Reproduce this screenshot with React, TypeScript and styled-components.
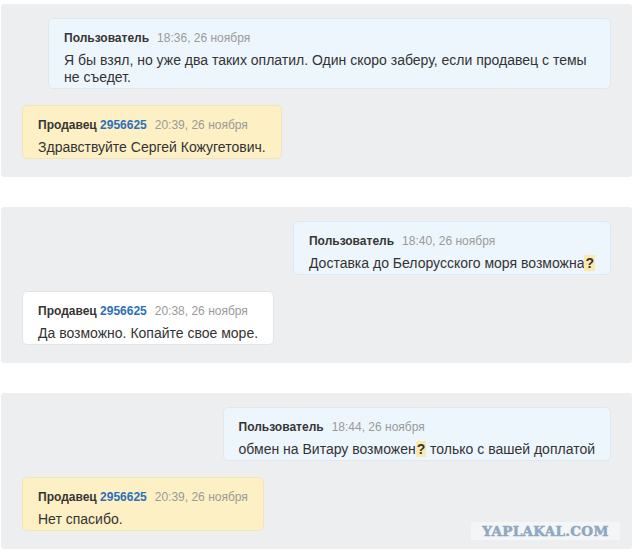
import React from "react";
import styled, { createGlobalStyle } from "styled-components";

const Global = createGlobalStyle`
  html, body { margin: 0; padding: 0; background: #ffffff; }
  body { font-family: "Liberation Sans", Arial, sans-serif; color: #333; }
`;

const Page = styled.div`
  display: flex;
  flex-direction: column;
  gap: 30px;
  padding: 4px 0 0 1px;
  width: 631px;
`;

const Panel = styled.section`
  position: relative;
  display: flex;
  flex-direction: column;
  gap: 16px;
  padding: 14px 21px 18px 21px;
  background: #eceef0;
  border-radius: 3px;
`;

const Row = styled.div<{ $side: "left" | "right" }>`
  display: flex;
  justify-content: ${(p) => (p.$side === "right" ? "flex-end" : "flex-start")};
`;

type Tone = "user" | "seller" | "plain";

const tones: Record<Tone, { bg: string; border: string }> = {
  user: { bg: "#eef6fd", border: "#dfe8f0" },
  seller: { bg: "#fdf0c5", border: "#f2e4b4" },
  plain: { bg: "#ffffff", border: "#e2e5e8" },
};

const Bubble = styled.div<{ $tone: Tone }>`
  box-sizing: border-box;
  max-width: 563px;
  padding: 11px 15px 2px 15px;
  background: ${(p) => tones[p.$tone].bg};
  border: 1px solid ${(p) => tones[p.$tone].border};
  border-radius: 5px;
`;

const Header = styled.div`
  font-size: 12px;
  line-height: 16px;
  white-space: nowrap;
`;

const Name = styled.span`
  font-weight: bold;
  color: #363636;
`;

const Id = styled.span`
  font-weight: bold;
  color: #2c70b9;
`;

const Time = styled.span`
  margin-left: 8px;
  color: #9a9a9a;
`;

const Body = styled.div`
  margin-top: 6px;
  font-size: 14px;
  line-height: 17px;
  color: #333;
`;

const Q = styled.span`
  font-weight: bold;
  background: #fbe9ae;
  padding: 0 1px;
`;

const Watermark = styled.div`
  position: absolute;
  right: 12px;
  bottom: 9px;
  width: 149px;
  height: 18px;
  display: flex;
  align-items: center;
  justify-content: center;
  background: #f3f5f7;
  color: #8ea8bf;
  font-family: "DejaVu Serif", "Liberation Serif", serif;
  font-weight: bold;
  font-size: 13.5px;
  letter-spacing: 0.3px;
  -webkit-text-stroke: 0.5px #8ea8bf;
`;

type Msg = {
  side: "left" | "right";
  tone: Tone;
  name: string;
  id?: string;
  time: string;
  body: React.ReactNode;
};

const threads: Msg[][] = [
  [
    {
      side: "right",
      tone: "user",
      name: "Пользователь",
      time: "18:36, 26 ноября",
      body: "Я бы взял, но уже два таких оплатил. Один скоро заберу, если продавец с темы не съедет.",
    },
    {
      side: "left",
      tone: "seller",
      name: "Продавец",
      id: "2956625",
      time: "20:39, 26 ноября",
      body: "Здравствуйте Сергей Кожугетович.",
    },
  ],
  [
    {
      side: "right",
      tone: "user",
      name: "Пользователь",
      time: "18:40, 26 ноября",
      body: (
        <>
          Доставка до Белорусского моря возможна<Q>?</Q>
        </>
      ),
    },
    {
      side: "left",
      tone: "plain",
      name: "Продавец",
      id: "2956625",
      time: "20:38, 26 ноября",
      body: "Да возможно. Копайте свое море.",
    },
  ],
  [
    {
      side: "right",
      tone: "user",
      name: "Пользователь",
      time: "18:44, 26 ноября",
      body: (
        <>
          обмен на Витару возможен<Q>?</Q> только с вашей доплатой
        </>
      ),
    },
    {
      side: "left",
      tone: "seller",
      name: "Продавец",
      id: "2956625",
      time: "20:39, 26 ноября",
      body: "Нет спасибо.",
    },
  ],
];

export default function App() {
  return (
    <>
      <Global />
      <Page>
        {threads.map((msgs, i) => (
          <Panel key={i}>
            {msgs.map((m, j) => (
              <Row key={j} $side={m.side}>
                <Bubble $tone={m.tone}>
                  <Header>
                    <Name>{m.name}</Name>
                    {m.id && <Id> {m.id}</Id>}
                    <Time>{m.time}</Time>
                  </Header>
                  <Body>{m.body}</Body>
                </Bubble>
              </Row>
            ))}
            {i === threads.length - 1 && <Watermark>YAPLAKAL.COM</Watermark>}
          </Panel>
        ))}
      </Page>
    </>
  );
}
